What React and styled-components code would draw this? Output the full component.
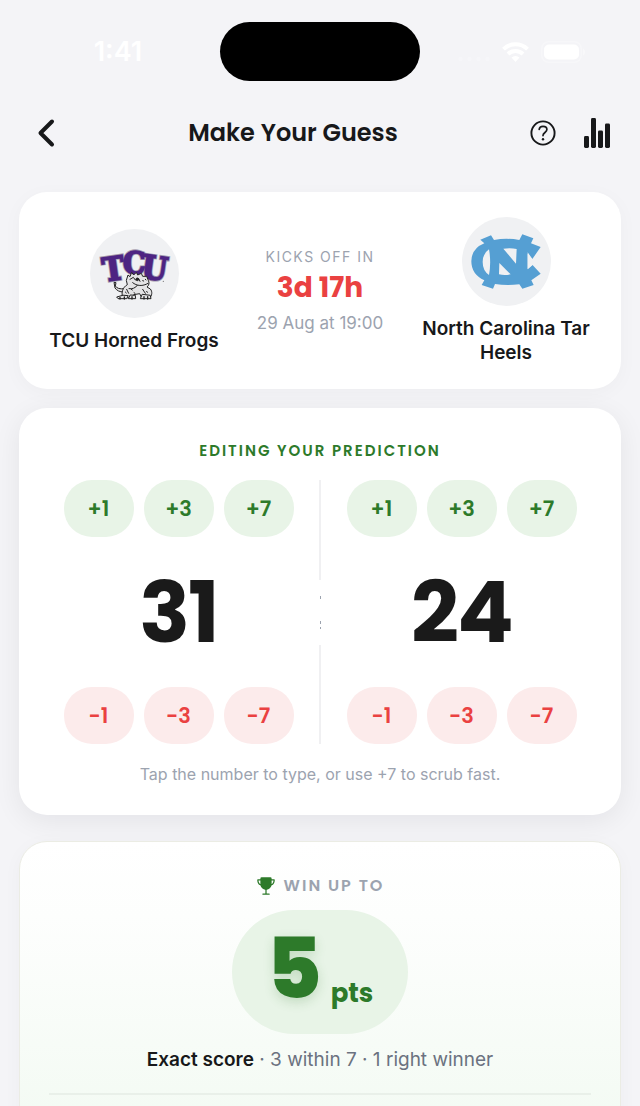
import React, { useState } from "react";
import styled, { createGlobalStyle } from "styled-components";
import { IoTrophy } from "react-icons/io5";

const Colors = {
  page: "#f4f4f7",
  ink: "#17181a",
  muted: "#9ca3af",
  body: "#6b7280",
  green: "#2d7a2a",
  greenBg: "#e8f4e7",
  red: "#ea4141",
  redBg: "#fcebeb",
  line: "#f0f0f2"
};

const Fonts = {
  display: `Poppins, Inter, "Liberation Sans", sans-serif`,
  text: `Inter, "Liberation Sans", sans-serif`
};

const GlobalStyle = createGlobalStyle`
  * {
    box-sizing: border-box;
  }

  body {
    margin: 0;
    background: ${Colors.page};
    color: ${Colors.ink};
    font-family: ${Fonts.text};
    -webkit-font-smoothing: antialiased;
  }

  button, input {
    font-family: inherit;
    border: none;
    padding: 0;
    background: none;
  }

  button {
    cursor: pointer;
  }

  svg {
    display: block;
  }
`;

const Screen = styled.div`
  height: 100vh;
  overflow: hidden;
`;

const StatusBar = styled.div`
  display: grid;
  grid-template-columns: 1fr 200px 1fr;
  align-items: center;
  height: 103px;
  padding: 0 16px;
  color: #fff;
`;

const Clock = styled.span`
  text-align: center;
  font-size: 27px;
  font-weight: 600;
`;

const Island = styled.div`
  height: 59px;
  border-radius: 30px;
  background: #000;
`;

const StatusIcons = styled.div`
  display: flex;
  align-items: center;
  justify-content: center;
  gap: 12px;
`;

const Header = styled.header`
  display: flex;
  align-items: center;
  height: 60px;
  padding: 0 29px 0 37px;
`;

const Title = styled.h1`
  flex: 1;
  margin: 0;
  text-align: center;
  font-family: ${Fonts.display};
  font-size: 24px;
  font-weight: 600;
  line-height: 34px;
`;

const HeaderActions = styled.div`
  display: flex;
  align-items: center;
  gap: 28px;
`;

const Main = styled.main`
  display: flex;
  flex-direction: column;
  gap: 19px;
  padding: 29px 19px 0;
`;

const Card = styled.section`
  border-radius: 28px;
  background: #fff;
  box-shadow: 0 4px 20px rgba(20, 20, 30, 0.03);
`;

const MatchCard = styled(Card)`
  display: grid;
  grid-template-columns: 1fr 194px 1fr;
  align-items: center;
  padding: 25px 26px 24px;
`;

const Team = styled.div`
  display: flex;
  flex-direction: column;
  align-items: center;
  gap: 11px;
`;

const Crest = styled.div`
  width: 89px;
  height: 89px;
  border-radius: 50%;
  background: #f0f1f3;
`;

const TeamName = styled.span`
  text-align: center;
  font-size: 19px;
  font-weight: 600;
  line-height: 24px;
`;

const Kickoff = styled.div`
  display: flex;
  flex-direction: column;
  align-items: center;
  padding-top: 2px;
  color: ${Colors.muted};
`;

const KickoffLabel = styled.span`
  font-size: 14px;
  line-height: 20px;
  letter-spacing: 1.5px;
`;

const Countdown = styled.strong`
  font-family: ${Fonts.display};
  font-size: 28px;
  font-weight: 700;
  line-height: 42px;
  color: ${Colors.red};
`;

const KickoffDate = styled.span`
  font-size: 17px;
  line-height: 28px;
`;

const ScoreCard = styled(Card)`
  padding: 31px 19px 29px;
  box-shadow: 0 6px 28px rgba(20, 20, 30, 0.07);
`;

const ScoreTitle = styled.h2`
  margin: 0 0 17px;
  text-align: center;
  font-family: ${Fonts.display};
  font-size: 15px;
  font-weight: 600;
  line-height: 24px;
  letter-spacing: 2px;
  color: ${Colors.green};
`;

const ScoreBoard = styled.div`
  display: grid;
  grid-template-columns: 1fr 2px 1fr;
`;

const ScoreColumn = styled.div`
  display: flex;
  flex-direction: column;
  align-items: center;
`;

const StepRow = styled.div`
  display: flex;
  gap: 10px;
`;

const StepButton = styled.button`
  width: 70px;
  height: 57px;
  border-radius: 28px;
  font-family: ${Fonts.display};
  font-size: 21px;
  font-weight: 600;
  color: ${props => (props.$minus ? Colors.red : Colors.green)};
  background: ${props => (props.$minus ? Colors.redBg : Colors.greenBg)};
`;

const ScoreInput = styled.input`
  width: 100%;
  height: 150px;
  text-align: center;
  font-family: ${Fonts.display};
  font-size: 84px;
  font-weight: 700;
  letter-spacing: -2px;
  color: #1a1a1a;
  outline: none;
`;

const Divider = styled.div`
  display: flex;
  flex-direction: column;
`;

const DividerLine = styled.div`
  flex: 1;
  background: ${Colors.line};
`;

const Hint = styled.p`
  margin: 18px 0 0;
  text-align: center;
  font-size: 16px;
  line-height: 24px;
  color: ${Colors.muted};
`;

const PrizeCard = styled(Card)`
  display: flex;
  flex-direction: column;
  align-items: center;
  margin-top: 7px;
  padding: 32px 29px 120px;
  border: 1px solid #ebece4;
  background: linear-gradient(#fff, #fdfefd 20%, #eff9ef);
`;

const PrizeLabel = styled.div`
  display: flex;
  align-items: center;
  gap: 8px;
  font-family: ${Fonts.display};
  font-size: 16px;
  font-weight: 600;
  line-height: 24px;
  letter-spacing: 2px;
  color: ${Colors.muted};

  svg {
    color: ${Colors.green};
  }
`;

const PrizePill = styled.div`
  display: flex;
  align-items: flex-end;
  justify-content: center;
  gap: 9px;
  min-width: 176px;
  height: 124px;
  margin: 12px 0 14px;
  border-radius: 62px;
  background: ${Colors.greenBg};
  font-family: ${Fonts.display};
  color: ${Colors.green};
`;

const PrizePoints = styled.strong`
  font-size: 84px;
  font-weight: 800;
  line-height: 130px;
  text-shadow: 0 4px 12px rgba(45, 122, 42, 0.2);
`;

const PrizeUnit = styled.span`
  padding-bottom: 21px;
  font-size: 26px;
  font-weight: 700;
  line-height: 40px;
`;

const PrizeRules = styled.p`
  margin: 0;
  font-size: 19px;
  line-height: 24px;
  color: ${Colors.body};

  strong {
    font-weight: 600;
    color: ${Colors.ink};
  }
`;

const PrizeRule = styled.hr`
  width: 100%;
  height: 2px;
  margin: 21px 0 0;
  border: none;
  background: #e9f0e9;
`;

const SignalIcon = () => (
  <svg width="32" height="22" viewBox="0 0 32 22" fill="#fff" opacity="0.25">
    {[2, 11, 20, 29].map(x => (
      <circle key={x} cx={x + 0.5} cy="18" r="2.2" />
    ))}
  </svg>
);

const WifiIcon = () => (
  <svg width="27" height="20" viewBox="0 0 27 20" fill="none" stroke="#fff" strokeWidth="4">
    <path d="M1.5 7.2a17 17 0 0 1 24 0" />
    <path d="M6 12a10.6 10.6 0 0 1 15 0" />
    <path d="M13.5 20l-4-4.4a5.6 5.6 0 0 1 8 0z" fill="#fff" stroke="none" />
  </svg>
);

const BatteryIcon = () => (
  <svg width="45" height="22" viewBox="0 0 45 22">
    <rect x="0.75" y="0.75" width="39.5" height="20.5" rx="7" fill="none" stroke="#fff" strokeOpacity="0.3" strokeWidth="1.5" />
    <rect x="3" y="3.5" width="35" height="15" rx="5" fill="#fff" />
    <path d="M42 7.5c2.6 1 2.6 6 0 7z" fill="#fff" opacity="0.4" />
  </svg>
);

const BackIcon = () => (
  <svg width="19" height="30" viewBox="0 0 19 30" fill="none" stroke={Colors.ink} strokeWidth="4" strokeLinecap="round" strokeLinejoin="round">
    <path d="M15 3.5L3.5 15l11.5 11.5" />
  </svg>
);

const HelpIcon = () => (
  <svg width="26" height="26" viewBox="0 0 26 26" fill="none" stroke={Colors.ink} strokeWidth="1.9" strokeLinecap="round">
    <circle cx="13" cy="13" r="11.6" />
    <path d="M9.2 9.4c.2-2 1.7-3.1 3.8-3.1s3.9 1.3 3.9 3.2c0 3-3.9 3-3.9 6.1" strokeWidth="1.7" />
    <circle cx="13" cy="19.2" r="1.2" fill={Colors.ink} stroke="none" />
  </svg>
);

const StatsIcon = () => (
  <svg width="27" height="30" viewBox="0 0 27 30" fill={Colors.ink}>
    <rect x="0" y="18" width="5" height="12" rx="1.4" />
    <rect x="7" y="0" width="5" height="30" rx="1.4" />
    <rect x="14" y="12.5" width="5" height="17.5" rx="1.4" />
    <rect x="21" y="5.5" width="5" height="24.5" rx="1.4" />
  </svg>
);

const FrogsCrest = () => (
  <svg width="89" height="89" viewBox="30 27 267 267" role="img" aria-label="TCU Horned Frogs">
    <g
      fontFamily="DejaVu Serif Condensed, DejaVu Serif"
      fontWeight="700"
      textAnchor="middle"
      fill="#4d2482"
      stroke="#4d2482"
      strokeWidth="5"
    >
      <g stroke="#a59cae" strokeWidth="10">
        <text x="105" y="180" fontSize="97" transform="rotate(-8 105 180)">T</text>
        <text x="163" y="163" fontSize="94">C</text>
        <text x="219" y="178" fontSize="97" transform="rotate(8 219 178)">U</text>
      </g>
      <text x="105" y="180" fontSize="97" transform="rotate(-8 105 180)">T</text>
      <text x="163" y="163" fontSize="94">C</text>
      <text x="219" y="178" fontSize="97" transform="rotate(8 219 178)">U</text>
    </g>
    <g fill="#e4e4e5" stroke="#222" strokeWidth="3" strokeLinejoin="round" strokeLinecap="round">
      <path d="M132 206c-12 2-22-1-26-8l2-10-6-1 3 17c6 8 14 12 25 12z" />
      <path d="M128 232c-5-14 0-30 14-38l-3-13 5-16 6 5 5-13 6 8 8-8 4 8 11-5 4 9 12 0 5 12c4 8 2 15-4 20l10 6c7 8 5 20-2 27l-24-1-6-12-18 3-5 9z" />
      <path d="M158 188c12 10 30 12 46 2M150 178l10-6 6 8 10-4 4 8M172 196c-5 8-16 12-25 10M188 208l8 12M140 208l6 12" fill="none" />
      <path d="M128 226l-18 5 4 5h26l4-8zM150 226l-5 10h22l-1-9zM186 224l-5 12h32l-2-9z" />
      <path d="M120 232v5M133 231v6M156 230v7M192 230v7M203 230v7" strokeWidth="4" />
      <circle cx="172" cy="178" r="4" fill="#222" />
      <path d="M136 216l3 3M154 208l3 2M162 218l3 2M200 214l2 3M188 182l3 1M196 178l2 2" />
    </g>
    <circle cx="250" cy="184" r="2" fill="#777" />
  </svg>
);

const HeelsCrest = () => (
  <svg width="89" height="89" viewBox="35 22 267 267" role="img" aria-label="North Carolina Tar Heels">
    <path
      fill="#559fd3"
      d="M90 90l32-13 9 14q38-7 76 0l9-17 33 12-7 15 29 11-25 36-14-16v46l14-13 25 27-28 20 7 14-34 11-9-13q-38 5-73-1l-6 14-34-11 8-14q-39-18-39-57 0-38 39-54z"
    />
    <path
      fill="#f0f1f3"
      d="M116 119q-19 13-19 38 0 26 19 39 7-38 0-77zM159 117q22-3 40 1l-2 44zM147 160l34 34q-18 4-35 0zM232 128l14 20 25 7-25 12-14 12z"
    />
  </svg>
);

// Only the middle sliver of the colon shows in the narrow divider column
const ColonSliver = () => (
  <svg width="2" height="65" viewBox="0 0 2 65" fill="#9ca3af">
    <rect x="1" y="16" width="1" height="3" />
    <rect x="1" y="41" width="1" height="3" />
    <rect x="1" y="47" width="1" height="2" />
  </svg>
);

const STEPS = [1, 3, 7];

const ScorePicker = ({ team, score, onChange }) => (
  <ScoreColumn>
    <StepRow>
      {STEPS.map(step => (
        <StepButton key={step} type="button" onClick={() => onChange(score + step)}>
          +{step}
        </StepButton>
      ))}
    </StepRow>
    <ScoreInput
      type="text"
      inputMode="numeric"
      aria-label={`${team} score`}
      value={score}
      onChange={e => onChange(Number(e.target.value) || 0)}
    />
    <StepRow>
      {STEPS.map(step => (
        <StepButton key={step} type="button" $minus onClick={() => onChange(Math.max(0, score - step))}>
          −{step}
        </StepButton>
      ))}
    </StepRow>
  </ScoreColumn>
);

const App = () => {
  const [home, setHome] = useState(31);
  const [away, setAway] = useState(24);

  return (
    <Screen>
      <GlobalStyle />
      <StatusBar>
        <Clock>1:41</Clock>
        <Island />
        <StatusIcons>
          <SignalIcon />
          <WifiIcon />
          <BatteryIcon />
        </StatusIcons>
      </StatusBar>
      <Header>
        <button type="button" aria-label="Back">
          <BackIcon />
        </button>
        <Title>Make Your Guess</Title>
        <HeaderActions>
          <button type="button" aria-label="Help">
            <HelpIcon />
          </button>
          <button type="button" aria-label="Stats">
            <StatsIcon />
          </button>
        </HeaderActions>
      </Header>
      <Main>
        <MatchCard>
          <Team>
            <Crest>
              <FrogsCrest />
            </Crest>
            <TeamName>TCU Horned Frogs</TeamName>
          </Team>
          <Kickoff>
            <KickoffLabel>KICKS OFF IN</KickoffLabel>
            <Countdown>3d 17h</Countdown>
            <KickoffDate>29 Aug at 19:00</KickoffDate>
          </Kickoff>
          <Team>
            <Crest>
              <HeelsCrest />
            </Crest>
            <TeamName>North Carolina Tar Heels</TeamName>
          </Team>
        </MatchCard>
        <ScoreCard>
          <ScoreTitle>EDITING YOUR PREDICTION</ScoreTitle>
          <ScoreBoard>
            <ScorePicker team="TCU Horned Frogs" score={home} onChange={setHome} />
            <Divider>
              <DividerLine />
              <ColonSliver />
              <DividerLine />
            </Divider>
            <ScorePicker team="North Carolina Tar Heels" score={away} onChange={setAway} />
          </ScoreBoard>
          <Hint>Tap the number to type, or use +7 to scrub fast.</Hint>
        </ScoreCard>
        <PrizeCard>
          <PrizeLabel>
            <IoTrophy size={20} />
            WIN UP TO
          </PrizeLabel>
          <PrizePill>
            <PrizePoints>5</PrizePoints>
            <PrizeUnit>pts</PrizeUnit>
          </PrizePill>
          <PrizeRules>
            <strong>Exact score</strong> · 3 within 7 · 1 right winner
          </PrizeRules>
          <PrizeRule />
        </PrizeCard>
      </Main>
    </Screen>
  );
};

export default App;
